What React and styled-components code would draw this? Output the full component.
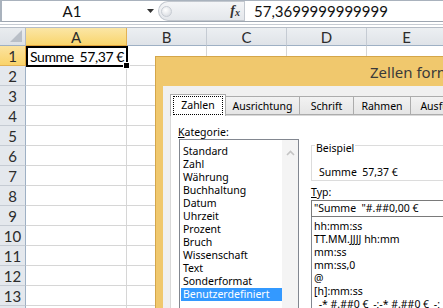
import React from "react";
import styled, { createGlobalStyle } from "styled-components";

const GlobalStyle = createGlobalStyle`
  * { box-sizing: border-box; }
  html, body { margin: 0; padding: 0; background: #fff; }
  body { font-family: "Noto Sans", "Liberation Sans", sans-serif; }
`;

const columns = ["A", "B", "C", "D", "E", "F"];
const rows = Array.from({ length: 14 }, (_, i) => i + 1);

const tabs = [
  { label: "Zahlen", width: 55 },
  { label: "Ausrichtung", width: 74 },
  { label: "Schrift", width: 54 },
  { label: "Rahmen", width: 57 },
  { label: "Ausfüllen", width: 66 },
  { label: "Schutz", width: 52 },
];

const categories = [
  "Standard",
  "Zahl",
  "Währung",
  "Buchhaltung",
  "Datum",
  "Uhrzeit",
  "Prozent",
  "Bruch",
  "Wissenschaft",
  "Text",
  "Sonderformat",
  "Benutzerdefiniert",
];

const formats = [
  "hh:mm:ss",
  "TT.MM.JJJJ hh:mm",
  "mm:ss",
  "mm:ss,0",
  "@",
  "[h]:mm:ss",
  '_-* #.##0 €_-;-* #.##0 €_-;_-* "-" €_-;_-@_-',
];

export default function App() {
  return (
    <>
      <GlobalStyle />
      <Screen>
        <FormulaBar>
          <NameBox>A1</NameBox>
          <DropArrow>
            <svg width="7" height="4" viewBox="0 0 7 4">
              <path d="M0 0h7L3.5 4z" fill="#333" />
            </svg>
          </DropArrow>
          <FxZone>
            <Knob />
            <Fx>
              f<sub>x</sub>
            </Fx>
          </FxZone>
          <FormulaInput>57,3699999999999</FormulaInput>
        </FormulaBar>
        <Strip />

        <Sheet>
          <Corner>
            <svg width="12" height="12" viewBox="0 0 12 12">
              <path d="M12 0v12H0z" fill="#b9bfc7" />
            </svg>
          </Corner>
          {columns.map((c) => (
            <ColHeader key={c} $active={c === "A"}>
              {c}
            </ColHeader>
          ))}
          {rows.map((r) => (
            <React.Fragment key={r}>
              <RowHeader $active={r === 1}>{r}</RowHeader>
              {columns.map((c) =>
                r === 1 && c === "A" ? (
                  <ActiveCell key={c}>
                    <span>Summe</span>
                    <span>57,37 €</span>
                  </ActiveCell>
                ) : (
                  <Cell key={c} />
                )
              )}
            </React.Fragment>
          ))}
        </Sheet>

        <Dialog>
          <TitleBar>Zellen formatieren</TitleBar>
          <DialogBody>
            <TabRow>
              {tabs.map((t, i) => (
                <Tab key={t.label} $w={t.width} $selected={i === 0}>
                  {i === 0 ? <Focus>{t.label}</Focus> : t.label}
                </Tab>
              ))}
            </TabRow>
            <Panel>
              <LeftColumn>
                <Label>
                  <u>K</u>ategorie:
                </Label>
                <ListBox>
                  <Items>
                    {categories.map((c) => (
                      <Item key={c} $selected={c === "Benutzerdefiniert"}>
                        {c}
                      </Item>
                    ))}
                  </Items>
                  <ScrollTrack>
                    <svg width="9" height="6" viewBox="0 0 9 6">
                      <path
                        d="M1 5l3.5-3.5L8 5"
                        fill="none"
                        stroke="#c4c4c4"
                        strokeWidth="1.6"
                      />
                    </svg>
                  </ScrollTrack>
                </ListBox>
              </LeftColumn>
              <RightColumn>
                <Group>
                  <Legend>Beispiel</Legend>
                  <Sample>Summe&nbsp;&nbsp;57,37 €</Sample>
                </Group>
                <TypeLabel>
                  <u>T</u>yp:
                </TypeLabel>
                <TypeInput>"Summe&nbsp;&nbsp;"#.##0,00 €</TypeInput>
                <FormatList>
                  {formats.map((f) => (
                    <FormatItem key={f}>{f}</FormatItem>
                  ))}
                </FormatList>
              </RightColumn>
            </Panel>
          </DialogBody>
        </Dialog>
      </Screen>
    </>
  );
}

const Screen = styled.div`
  position: relative;
  width: 443px;
  height: 308px;
  overflow: hidden;
  background: #fff;
`;

const FormulaBar = styled.div`
  display: flex;
  height: 22px;
  border-top: 1px solid #a9b2bd;
  border-left: 2px solid #a9b2bd;
  border-bottom: 1px solid #9ea6b1;
  background: #fff;
  font-family: Lato, "Open Sans", sans-serif;
  font-size: 15px;
  color: #111;
`;

const NameBox = styled.div`
  width: 140px;
  display: flex;
  align-items: center;
  justify-content: center;
`;

const DropArrow = styled.div`
  width: 16px;
  display: flex;
  align-items: center;
  justify-content: center;
`;

const FxZone = styled.div`
  width: 86px;
  display: flex;
  align-items: center;
  justify-content: space-between;
  padding: 0 4px 0 2px;
  background: linear-gradient(#f4f5f7, #e4e7eb);
  border: 1px solid #c3c8cf;
  border-right: none;
  border-radius: 11px 0 0 11px;
`;

const Knob = styled.div`
  width: 11px;
  height: 11px;
  border-radius: 50%;
  background: radial-gradient(circle at 40% 35%, #fff, #d2d6dc);
  border: 1px solid #c7ccd3;
`;

const Fx = styled.div`
  font-family: "Liberation Serif", serif;
  font-style: italic;
  font-weight: bold;
  font-size: 14px;
  color: #333;

  sub {
    font-size: 10px;
    vertical-align: -1px;
  }
`;

const FormulaInput = styled.div`
  flex: 1;
  display: flex;
  align-items: center;
  padding-left: 9px;
  border-left: 1px solid #c3c8cf;
`;

const Strip = styled.div`
  height: 6px;
  border-bottom: 1px solid #b5bcc6;
  background: linear-gradient(#fff 0 2px, #c7ccd3 2px 3px, #fff 3px);
`;

const Sheet = styled.div`
  display: grid;
  grid-template-columns: 26px 101px repeat(5, 80px);
  grid-template-rows: 18px;
  grid-auto-rows: 20px;
  font-family: Lato, "Open Sans", sans-serif;
  font-size: 15px;
`;

const HeaderBase = styled.div`
  display: flex;
  align-items: center;
  justify-content: center;
  color: #2c2c2c;
`;

const Corner = styled(HeaderBase)`
  justify-content: flex-end;
  align-items: flex-end;
  padding: 0 3px 3px 0;
  background: linear-gradient(#e9ecef, #dde1e6);
  border-right: 1px solid #b3bac3;
  border-bottom: 1px solid #9eb0c4;
`;

const ColHeader = styled(HeaderBase)`
  background: ${(p) =>
    p.$active
      ? "linear-gradient(#fbe6a6, #f9d56d)"
      : "linear-gradient(#eceff2, #dfe3e8)"};
  border-right: 1px solid ${(p) => (p.$active ? "#e2b255" : "#c5cbd3")};
  border-bottom: 1px solid ${(p) => (p.$active ? "#e2a43a" : "#9eb0c4")};
`;

const RowHeader = styled(HeaderBase)`
  background: ${(p) =>
    p.$active ? "linear-gradient(#fbe3a0, #f9d36a)" : "#e4e8ed"};
  border-right: 1px solid ${(p) => (p.$active ? "#e2a43a" : "#9eb0c4")};
  border-bottom: 1px solid ${(p) => (p.$active ? "#e2b255" : "#c5cbd3")};
`;

const Cell = styled.div`
  border-right: 1px solid #d6d6d6;
  border-bottom: 1px solid #d6d6d6;
`;

const ActiveCell = styled.div`
  position: relative;
  z-index: 1;
  display: flex;
  align-items: center;
  justify-content: space-between;
  padding: 0 2px 0 2px;
  margin: 0 -1px -1px 0;
  border: 2px solid #000;
  color: #000;
  font-size: 14px;
  letter-spacing: -0.4px;
  white-space: nowrap;

  &::after {
    content: "";
    position: absolute;
    right: -4px;
    bottom: -4px;
    width: 5px;
    height: 5px;
    background: #000;
    border: 1px solid #fff;
  }
`;

const Dialog = styled.div`
  position: absolute;
  left: 155px;
  top: 56px;
  width: 570px;
  height: 300px;
  display: flex;
  flex-direction: column;
  padding: 0 7px 7px;
  background: #f0c86d;
  border: 1px solid #d4a64a;
  z-index: 5;
`;

const TitleBar = styled.div`
  height: 29px;
  flex-shrink: 0;
  display: flex;
  align-items: center;
  padding-left: 207px;
  font-size: 15px;
  color: #3a3a3a;
`;

const DialogBody = styled.div`
  flex: 1;
  display: flex;
  flex-direction: column;
  padding: 8px 0 0 7px;
  background: #f0f0f0;
  font-size: 10.5px;
  color: #000;
`;

const TabRow = styled.div`
  display: flex;
  align-items: flex-end;
  height: 21px;
`;

const Tab = styled.div`
  position: relative;
  z-index: ${(p) => (p.$selected ? 2 : 1)};
  width: ${(p) => p.$w + 1}px;
  height: ${(p) => (p.$selected ? "22px" : "19px")};
  display: flex;
  align-items: center;
  justify-content: center;
  padding-bottom: ${(p) => (p.$selected ? "1px" : "0")};
  margin-left: -1px;
  margin-bottom: ${(p) => (p.$selected ? "-1px" : "0")};
  background: ${(p) =>
    p.$selected ? "#fff" : "linear-gradient(#f2f2f2, #e5e5e5)"};
  border: 1px solid #acacac;
  border-bottom: ${(p) => (p.$selected ? "none" : "1px solid #acacac")};
  white-space: nowrap;

  &:first-child {
    margin-left: 0;
  }
`;

const Focus = styled.span`
  display: block;
  padding: 1px 7px 2px;
  border: 1px dotted #000;
`;

const Panel = styled.div`
  flex: 1;
  display: flex;
  background: #fff;
  border: 1px solid #d9d9d9;
`;

const LeftColumn = styled.div`
  width: 129px;
  padding: 10px 0 0 8px;
`;

const Label = styled.div`
  line-height: 13px;
  margin-left: -1px;
`;

const ListBox = styled.div`
  display: flex;
  width: 120px;
  height: 180px;
  border: 1px solid #828790;
`;

const Items = styled.div`
  width: 102px;
  padding: 5px 0 0 1px;
`;

const Item = styled.div`
  line-height: 13px;
  height: 13px;
  padding-left: 2px;
  white-space: nowrap;
  background: ${(p) => (p.$selected ? "#3399ff" : "transparent")};
  color: ${(p) => (p.$selected ? "#fff" : "#000")};
`;

const ScrollTrack = styled.div`
  flex: 1;
  display: flex;
  justify-content: center;
  padding-top: 10px;
  background: #f4f4f4;
`;

const RightColumn = styled.div`
  width: 300px;
  padding: 20px 0 0 11px;
`;

const Group = styled.fieldset`
  margin: 0;
  padding: 0 0 1px 3px;
  border: 1px solid #dcdcdc;
`;

const Legend = styled.legend`
  padding: 6px 1px 0;
  line-height: 12px;
`;

const Sample = styled.div`
  margin-top: 11px;
  padding-left: 4px;
  line-height: 14px;
`;

const TypeLabel = styled.div`
  margin-top: 4px;
  line-height: 14px;
`;

const TypeInput = styled.div`
  margin-top: 1px;
  height: 17px;
  line-height: 15px;
  padding-left: 2px;
  border: 1px solid #7a7a7a;
  white-space: nowrap;
`;

const FormatList = styled.div`
  height: 120px;
  padding: 3px 0 0 2px;
  border: 1px solid #828790;
  border-top: none;
`;

const FormatItem = styled.div`
  line-height: 13px;
  height: 13px;
  white-space: nowrap;
`;
